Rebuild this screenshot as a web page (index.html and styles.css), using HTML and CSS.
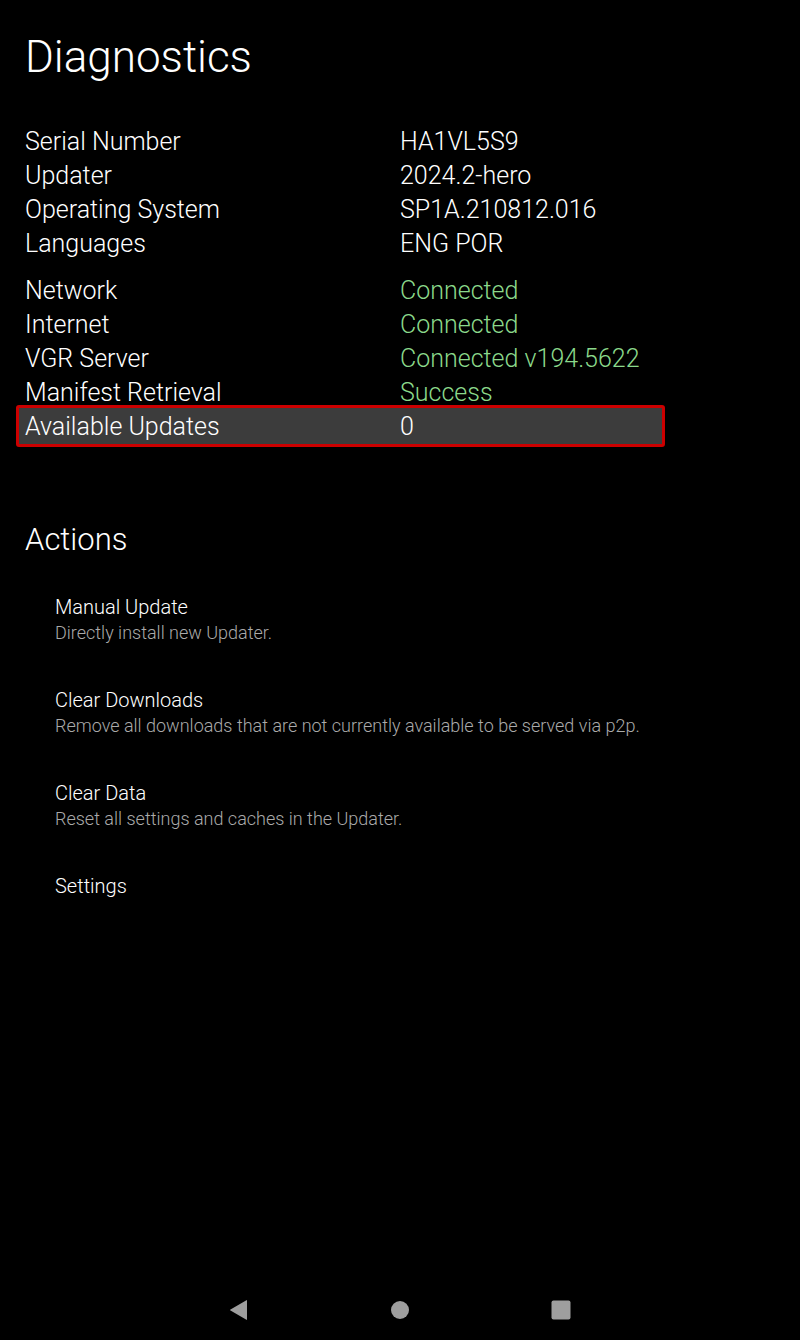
FILE: index.html
```html
<!DOCTYPE html>
<html>
<head>
<meta charset="utf-8">
<link rel="stylesheet" href="styles.css">
</head>
<body>
<div class="screen">
  <main class="content">
    <h1 class="title">Diagnostics</h1>
    <div class="group">
      <div class="row"><span class="label">Serial Number</span><span class="value">HA1VL5S9</span></div>
      <div class="row"><span class="label">Updater</span><span class="value">2024.2-hero</span></div>
      <div class="row"><span class="label">Operating System</span><span class="value">SP1A.210812.016</span></div>
      <div class="row"><span class="label">Languages</span><span class="value">ENG POR</span></div>
    </div>
    <div class="group group2">
      <div class="row"><span class="label">Network</span><span class="value ok">Connected</span></div>
      <div class="row"><span class="label">Internet</span><span class="value ok">Connected</span></div>
      <div class="row"><span class="label">VGR Server</span><span class="value ok">Connected v194.5622</span></div>
      <div class="row"><span class="label">Manifest Retrieval</span><span class="value ok">Success</span></div>
      <div class="row selected"><span class="label">Available Updates</span><span class="value">0</span></div>
    </div>
    <h2 class="section">Actions</h2>
    <ul class="actions">
      <li class="action"><div class="action-title">Manual Update</div><div class="action-desc">Directly install new Updater.</div></li>
      <li class="action"><div class="action-title">Clear Downloads</div><div class="action-desc">Remove all downloads that are not currently available to be served via p2p.</div></li>
      <li class="action"><div class="action-title">Clear Data</div><div class="action-desc">Reset all settings and caches in the Updater.</div></li>
      <li class="action"><div class="action-title">Settings</div></li>
    </ul>
  </main>
  <nav class="navbar">
    <svg class="nav-icon" width="20" height="20" viewBox="0 0 20 20"><path d="M18 1 L18 19 Q18 20.5 17 19.6 L1.5 10.6 Q0.5 10 1.5 9.4 L17 0.4 Q18 -0.5 18 1 Z" fill="#9e9e9e"/></svg>
    <svg class="nav-icon" width="20" height="20" viewBox="0 0 20 20"><circle cx="10" cy="10" r="9" fill="#9e9e9e"/></svg>
    <svg class="nav-icon" width="20" height="20" viewBox="0 0 20 20"><rect x="0.5" y="0.5" width="19" height="19" rx="2" fill="#9e9e9e"/></svg>
  </nav>
</div>
</body>
</html>
```

FILE: styles.css
```css
html, body {
  margin: 0;
  padding: 0;
  background: #000;
}
.screen {
  width: 800px;
  height: 1340px;
  display: flex;
  flex-direction: column;
  font-family: Roboto, "Noto Sans", sans-serif;
  font-weight: 300;
  color: #fff;
}
.content {
  flex: 1;
  padding: 0 0 0 25px;
}
.title {
  margin: 31px 0 0 0;
  font-size: 44px;
  font-weight: 300;
  line-height: 52px;
}
.group {
  margin-top: 41px;
  width: 640px;
}
.group2 {
  margin-top: 13px;
}
.row {
  display: flex;
  height: 34px;
  align-items: center;
  font-size: 25px;
}
.label {
  width: 375px;
}
.ok {
  color: #8bd98b;
}
.selected {
  margin-top: -4px;
  margin-left: -9px;
  padding-left: 6px;
  width: 637px;
  height: 36px;
  background: #3c3c3c;
  border: 3px solid #cc0000;
  border-radius: 3px;
}
.section {
  margin: 73px 0 0 0;
  font-size: 31px;
  font-weight: 300;
  line-height: 40px;
}
.actions {
  list-style: none;
  margin: 35px 0 0 0;
  padding: 0 0 0 30px;
  display: flex;
  flex-direction: column;
  gap: 41px;
}
.action {
  height: 52px;
}
.action-title {
  font-size: 20px;
  line-height: 24px;
}
.action-desc {
  font-size: 18px;
  line-height: 28px;
  color: #aaaaaa;
}
.navbar {
  height: 60px;
  display: flex;
  justify-content: center;
  align-items: center;
  gap: 141px;
}
.nav-icon {
  display: block;
}
```
